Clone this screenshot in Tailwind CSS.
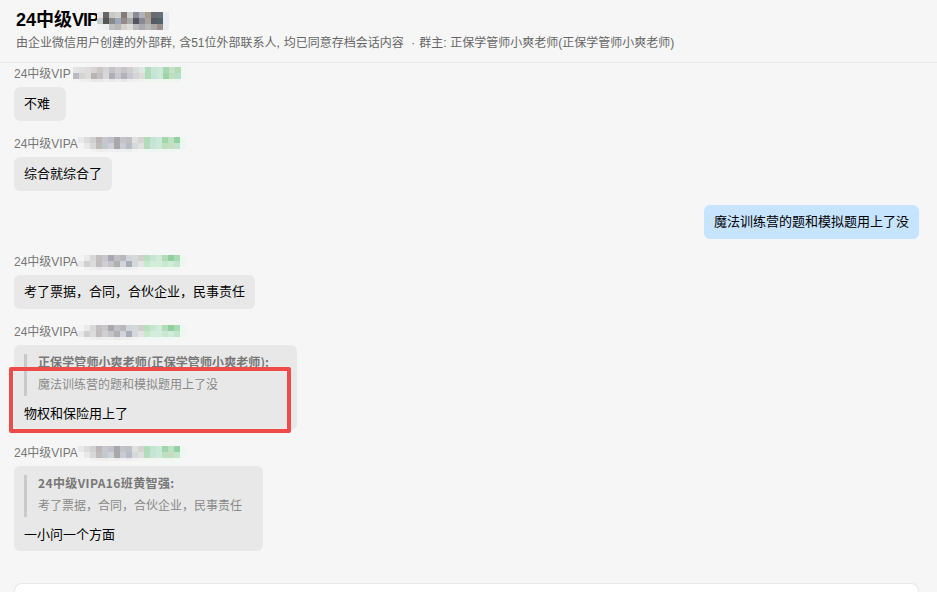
<!DOCTYPE html>
<html lang="zh-CN">
<head>
    <meta charset="UTF-8">
    <title>会话存档</title>
    <script src="https://cdn.jsdelivr.net/npm/@tailwindcss/browser@4"></script>
</head>
<body class="h-[592px] overflow-hidden bg-[#f6f6f6] font-['Liberation_Sans','Noto_Sans_CJK_SC',sans-serif]">

<!-- Header -->
<header class="h-[63px] border-b border-[#e6e6e6] pl-4 pt-[9px]">
    <div class="flex items-center h-[22px]">
        <h1 class="text-[18px] leading-[22px] font-bold text-black">24中级<span class="tracking-[-1px]">VIP</span></h1>
        <svg data-mosaic="title" width="72" height="18" class="-ml-[1px] mt-[1px]"></svg>
    </div>
    <p class="mt-[2px] text-[12px] leading-[20px] text-[#666] whitespace-nowrap [word-spacing:0.5px]">由企业微信用户创建的外部群, 含51位外部联系人, 均已同意存档会话内容 &nbsp;· 群主: 正保学管师小爽老师(正保学管师小爽老师)</p>
</header>

<!-- Messages -->
<main class="relative pl-[14px] pr-[18px]">
    <div>
        <div class="flex items-center h-[20px] pt-[2px] text-[12px] text-[#777]">24中级VIP<svg data-mosaic="first" width="114" height="15" class="ml-[2px]"></svg></div>
        <div class="mt-1 w-fit min-w-[52px] rounded-[6px] bg-[#e8e8e8] px-[10px] py-[7px] text-[13px] leading-[20px] text-black">不难</div>
    </div>
    <div class="mt-3">
        <div class="flex items-center h-[20px] pt-[2px] text-[12px] text-[#777]">24中级VIPA<svg data-mosaic="a" width="108" height="15"></svg></div>
        <div class="mt-1 w-fit rounded-[6px] bg-[#e8e8e8] px-[10px] py-[7px] text-[13px] leading-[20px] text-black">综合就综合了</div>
    </div>
    <div class="mt-[14px] flex justify-end">
        <div class="rounded-[6px] bg-[#c7e4ff] px-[10px] py-[7px] text-[13px] leading-[20px] text-black">魔法训练营的题和模拟题用上了没</div>
    </div>
    <div class="mt-3">
        <div class="flex items-center h-[20px] pt-[2px] text-[12px] text-[#777]">24中级VIPA<svg data-mosaic="b" width="108" height="15"></svg></div>
        <div class="mt-1 w-fit rounded-[6px] bg-[#e8e8e8] px-[10px] py-[7px] text-[13px] leading-[20px] text-black">考了票据，合同，合伙企业，民事责任</div>
    </div>
    <div class="mt-3">
        <div class="flex items-center h-[20px] pt-[2px] text-[12px] text-[#777]">24中级VIPA<svg data-mosaic="b" width="108" height="15"></svg></div>
        <div class="mt-1 w-[283px] rounded-[6px] bg-[#e8e8e8] px-[10px] pt-[9px] pb-[6px]">
            <div class="flex h-[42px] flex-col whitespace-nowrap border-l-[3px] border-[#c8c9cb] pl-[11px]">
                <span class="-mt-[1px] font-['Noto_Sans_CJK_SC',sans-serif] text-[12px] leading-[17px] font-bold tracking-[0.1px] text-[#777]">正保学管师小爽老师(正保学管师小爽老师):</span>
                <span class="mt-[5px] text-[12px] leading-[20px] text-[#888]">魔法训练营的题和模拟题用上了没</span>
            </div>
            <div class="mt-[8px] text-[13px] leading-[20px] text-black">物权和保险用上了</div>
        </div>
    </div>
    <div class="mt-3">
        <div class="flex items-center h-[20px] pt-[2px] text-[12px] text-[#777]">24中级VIPA<svg data-mosaic="a" width="108" height="15"></svg></div>
        <div class="mt-1 w-[249px] rounded-[6px] bg-[#e8e8e8] px-[10px] pt-[9px] pb-[6px]">
            <div class="flex h-[42px] flex-col whitespace-nowrap border-l-[3px] border-[#c8c9cb] pl-[11px]">
                <span class="-mt-[1px] font-['Noto_Sans_CJK_SC',sans-serif] text-[12px] leading-[17px] font-bold tracking-[0.4px] text-[#777]">24中级VIPA16班黄智强:</span>
                <span class="mt-[5px] text-[12px] leading-[20px] text-[#888]">考了票据，合同，合伙企业，民事责任</span>
            </div>
            <div class="mt-[8px] text-[13px] leading-[20px] text-black">一小问一个方面</div>
        </div>
    </div>

    <!-- Input card, cut off by the window -->
    <div class="mt-[32px] h-[9px] rounded-t-[8px] border border-b-0 border-[#e8e8e8] bg-white"></div>

    <!-- Red annotation drawn on the screenshot -->
    <div class="absolute left-[9px] top-[304px] h-[66px] w-[282px] rounded-[2px] border-[4px] border-[#ef4b4b]"></div>
</main>

<script>
    // blurred-out names, one list of colours per row of 6px cells
    const mosaics = {
        title: [
            ['e4e6ea','666666','c8c8c8','d0d0cc','857a78','ccccc8','8a8a96','b0b0b8','a59c90','6c6c70','667078','e8ecf2'],
            ['c8ccd0','555555','8a8a8a','9aa9bc','958a88','aaaaaa','55555f','888896','aaa29a','555b60','556068','e8ecf2'],
            ['f0f2f4','eeeeee','c0c0c0','b8b8b8','d8d0cc','dddddd','bbbbbb','a8a8b0','b8b8b8','a8a8a8','998f85','e8ecf2']
        ],
        first: [
            ['e4e4e6','e0e0e0','dcdcdc','d8d4d4','cdc6c4','d4d4d8','c4c4c8','d0d0d4','c8c4c4','cfcfd2','dcdcdc','e2e6e6','b0dcb8','c8e4d4','cce8d8','a8d8b0','c4e2c8','b0dcb8','f0f6f4'],
            ['b8bcc0','d4d4d6','dcdcdc','b8b4b4','c4c0c0','d8d8dc','b0b0b4','c8c8d0','b4b4b8','c8c8d0','d4d4d4','dcdcd8','b0dcb8','c4e4d4','cce8d8','a0d4a8','bfe0c0','b8e0c4','f0f6f4'],
            ['f4f4f4','f0f0f0','eeeeee','e8e8e8','e8e8e8','eeeeee','e8e8e8','eeeeee','e8e8e8','eeeeee','f0f0f0','f2f2f2','eef6f0','eef6f0','eef6f0','eef6f0','eef6f0','eef6f0','f6f6f6']
        ],
        a: [
            ['e8e8ea','dcdcdc','d0d0d0','bdb6b6','c8c8cc','c0c0c8','a8a8ac','c4c4c8','c0c0c4','e0e0e0','d4d4d0','b0dcb8','c4e4d4','cce8d8','a0d8ac','c0e0c4','90d4a4','eef6f2'],
            ['f4f4f4','e8e8e8','d8d8d8','c0bcbc','c0c8d0','d0d0d8','a8a8a8','c8ccd4','b8bcc4','d8d8d8','e0e0e0','b4dcbc','c8e4d8','cce8d8','bce0c0','c8dcc0','c0e4cc','eef6f2'],
            ['f6f6f6','f6f6f6','f2f2f2','eeeeee','eeeeee','f0f0f0','eeeeee','f0f0f0','eeeeee','f2f2f2','f4f4f4','f0f6f2','f0f6f2','f0f6f2','f0f6f2','f0f6f2','f2f7f4','f6f6f6']
        ],
        b: [
            ['f4f4f4','eaeaea','d8d8d8','c4bebe','c8c8cc','a8a8b0','c0c0c4','b8b8bc','d0d4dc','d8d8d8','d0d0cc','b8e0c0','c8e4d4','d0ead8','b4dcb8','90d0a0','a8dcb4','eef6f2'],
            ['e8e8e8','d0d0d0','dcdcdc','c0bcbc','d0d0d4','c4c4c8','b0b0b0','d0d4dc','a8acb4','d8d8dc','e4e4e4','c8e8d0','d4ecdc','d4ecdc','c8e8d0','d0ecd8','c4e4cc','eef6f2'],
            ['f6f6f6','f2f2f2','eeeeee','eaeaea','eeeeee','eeeeee','eaeaea','eeeeee','eeeeee','f2f2f2','f4f4f4','f0f6f2','f0f6f2','f0f6f2','f0f6f2','f0f6f2','f2f7f4','f6f6f6']
        ]
    };

    document.querySelectorAll('svg[data-mosaic]').forEach(svg => {
        mosaics[svg.dataset.mosaic].forEach((row, y) => {
            row.forEach((color, x) => {
                const cell = document.createElementNS('http://www.w3.org/2000/svg', 'rect');
                cell.setAttribute('x', x * 6);
                cell.setAttribute('y', y * 6);
                cell.setAttribute('width', 6);
                cell.setAttribute('height', 6);
                cell.setAttribute('fill', '#' + color);
                svg.appendChild(cell);
            });
        });
    });
</script>
</body>
</html>
